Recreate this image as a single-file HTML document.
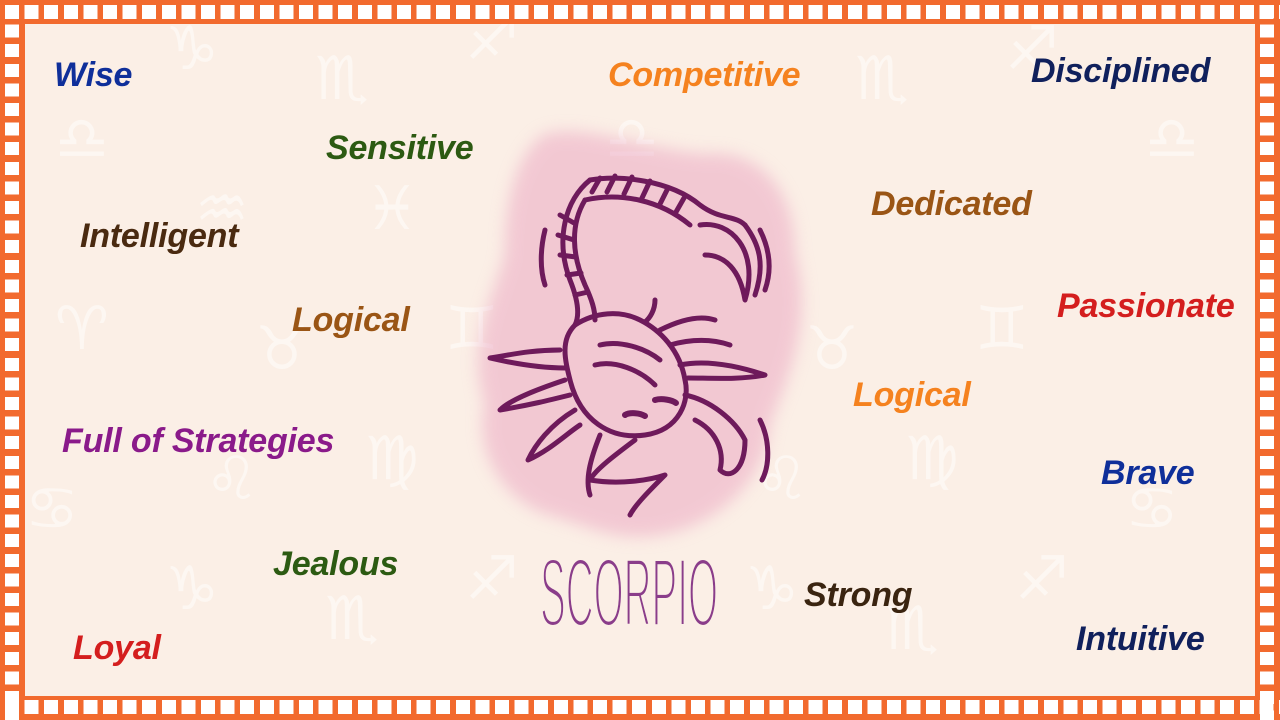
<!DOCTYPE html>
<html><head><meta charset="utf-8"><style>
*{margin:0;padding:0;box-sizing:border-box}
body{width:1280px;height:720px;overflow:hidden;background:#f26a2e;position:relative;font-family:"Liberation Sans",sans-serif}
.sq{position:absolute}
.top{left:0;top:5px;width:1280px;height:14px;background:repeating-linear-gradient(90deg,transparent 0 5px,#fff 5px 19px,transparent 19px 19.6px)}
.bot{left:0;top:700px;width:1280px;height:14px;background:repeating-linear-gradient(90deg,transparent 0 5px,#fff 5px 19px,transparent 19px 19.6px)}
.lft{left:5px;top:0;width:14px;height:720px;background:repeating-linear-gradient(180deg,transparent 0 5px,#fff 5px 18px,transparent 18px 19.6px)}
.rgt{left:1260px;top:0;width:14px;height:720px;background:repeating-linear-gradient(180deg,transparent 0 5px,#fff 5px 18px,transparent 18px 19.6px)}
.inner{position:absolute;left:25px;top:24px;width:1230px;height:672px;background:#fbefe6;overflow:hidden}
.w{position:absolute;font-style:italic;font-weight:bold;font-size:34px;white-space:nowrap;letter-spacing:-0.2px}
.z{position:absolute;color:#fff;opacity:.5;font-size:60px;font-family:"DejaVu Sans",sans-serif}
</style></head><body>
<div class="sq top"></div><div class="sq bot"></div><div class="sq lft"></div><div class="sq rgt"></div>
<div class="inner">
<div class="z" style="left:140px;top:-10px">♑</div>
<div class="z" style="left:290px;top:20px">♏</div>
<div class="z" style="left:440px;top:-20px">♐</div>
<div class="z" style="left:30px;top:80px">♎</div>
<div class="z" style="left:580px;top:80px">♎</div>
<div class="z" style="left:980px;top:-10px">♐</div>
<div class="z" style="left:830px;top:20px">♏</div>
<div class="z" style="left:1120px;top:80px">♎</div>
<div class="z" style="left:170px;top:150px">♒</div>
<div class="z" style="left:340px;top:150px">♓</div>
<div class="z" style="left:30px;top:270px">♈</div>
<div class="z" style="left:230px;top:290px">♉</div>
<div class="z" style="left:780px;top:290px">♉</div>
<div class="z" style="left:950px;top:270px">♊</div>
<div class="z" style="left:420px;top:270px">♊</div>
<div class="z" style="left:340px;top:400px">♍</div>
<div class="z" style="left:880px;top:400px">♍</div>
<div class="z" style="left:0px;top:450px">♋</div>
<div class="z" style="left:1100px;top:450px">♋</div>
<div class="z" style="left:180px;top:420px">♌</div>
<div class="z" style="left:730px;top:420px">♌</div>
<div class="z" style="left:140px;top:530px">♑</div>
<div class="z" style="left:300px;top:560px">♏</div>
<div class="z" style="left:440px;top:520px">♐</div>
<div class="z" style="left:720px;top:530px">♑</div>
<div class="z" style="left:990px;top:520px">♐</div>
<div class="z" style="left:860px;top:570px">♏</div>
<svg width="1230" height="672" style="position:absolute;left:0;top:0">
<defs><filter id="b"><feGaussianBlur stdDeviation="8"/></filter></defs>
<path d="M520 110 C560 100 620 125 680 130 C730 125 770 160 770 230 C790 300 760 360 745 400 C740 460 690 500 640 510 C590 520 560 500 520 490 C470 470 450 420 460 380 C440 320 470 270 480 230 C480 180 490 130 520 110 Z" fill="#eaa2c0" opacity=".5" filter="url(#b)"/>
<g fill="none" stroke="#6e1a5b" stroke-width="5" stroke-linecap="round" stroke-linejoin="round" transform="translate(-25,-24)">
<path d="M590 180 C620 175 670 180 700 205 C720 220 735 215 745 225"/>
<path d="M585 200 C620 192 660 200 690 225"/>
<path d="M600 178 l-8 14 M615 176 l-8 16 M632 177 l-8 17 M650 181 l-8 17 M668 188 l-8 16 M684 198 l-8 14"/>
<path d="M590 180 C565 200 555 240 570 280 C578 300 580 315 575 325"/>
<path d="M585 200 C570 225 572 255 585 285 C592 300 595 310 595 320"/>
<path d="M560 215 l14 8 M558 235 l16 5 M560 255 l16 2 M567 275 l14 -2 M575 295 l13 -3"/>
<path d="M700 225 C730 220 760 250 745 300 C740 270 725 255 705 255"/>
<path d="M745 225 C760 245 765 265 755 295"/>
<path d="M575 325 C560 340 565 360 570 380 C580 420 610 440 645 435 C680 430 690 400 685 380 C680 350 660 330 640 320 C620 310 595 312 575 325 Z"/>
<path d="M600 345 C620 340 645 348 660 360 M595 365 C615 360 640 370 655 385"/>
<path d="M625 415 C630 412 640 413 645 416 M655 400 C662 398 672 400 676 403" stroke-width="6"/>
<path d="M560 350 C530 350 510 355 490 358 C520 365 545 368 565 368"/>
<path d="M565 380 C535 390 510 400 500 410 C530 405 550 400 570 395"/>
<path d="M575 410 C550 425 535 445 528 460 C550 450 565 435 580 425"/>
<path d="M600 435 C590 460 585 480 590 495"/>
<path d="M660 330 C680 320 700 315 715 320 M670 345 C695 338 715 340 730 345 M680 365 C705 360 735 365 765 375 C740 380 710 378 688 378"/>
<path d="M685 395 C710 400 735 420 745 440 C745 470 730 480 720 470 M695 420 C715 430 725 450 720 470"/>
<path d="M635 440 C615 455 595 470 590 480 C620 485 650 480 665 475 C650 490 635 505 630 515"/>
<path d="M655 300 C655 310 650 318 645 322 M545 230 C540 250 540 270 545 285 M760 230 C770 250 772 270 765 290 M760 420 C770 440 770 465 762 480"/>
</g>
<text x="0" y="0" font-family="Liberation Sans Narrow, Liberation Sans, sans-serif" font-size="72" fill="#8a3d8a" transform="translate(515,602) scale(1,1.35)" textLength="178" lengthAdjust="spacingAndGlyphs" stroke="#fbefe6" stroke-width="3">SCORPIO</text>
</svg>
<div class="w" style="left:29px;top:32px;color:#0f2f9a">Wise</div>
<div class="w" style="left:583px;top:32px;color:#f5821f">Competitive</div>
<div class="w" style="left:1006px;top:28px;color:#10205c">Disciplined</div>
<div class="w" style="left:301px;top:105px;color:#2c5a12">Sensitive</div>
<div class="w" style="left:846px;top:161px;color:#9a5515">Dedicated</div>
<div class="w" style="left:55px;top:193px;color:#4a2a10">Intelligent</div>
<div class="w" style="left:1032px;top:263px;color:#d41e1e">Passionate</div>
<div class="w" style="left:267px;top:277px;color:#9a5515">Logical</div>
<div class="w" style="left:828px;top:352px;color:#f5821f">Logical</div>
<div class="w" style="left:37px;top:398px;color:#8a1a8a">Full of Strategies</div>
<div class="w" style="left:1076px;top:430px;color:#0f2f9a">Brave</div>
<div class="w" style="left:248px;top:521px;color:#2c5a12">Jealous</div>
<div class="w" style="left:779px;top:552px;color:#3a2410">Strong</div>
<div class="w" style="left:48px;top:605px;color:#d41e1e">Loyal</div>
<div class="w" style="left:1051px;top:596px;color:#10205c">Intuitive</div>
</div>
</body></html>
